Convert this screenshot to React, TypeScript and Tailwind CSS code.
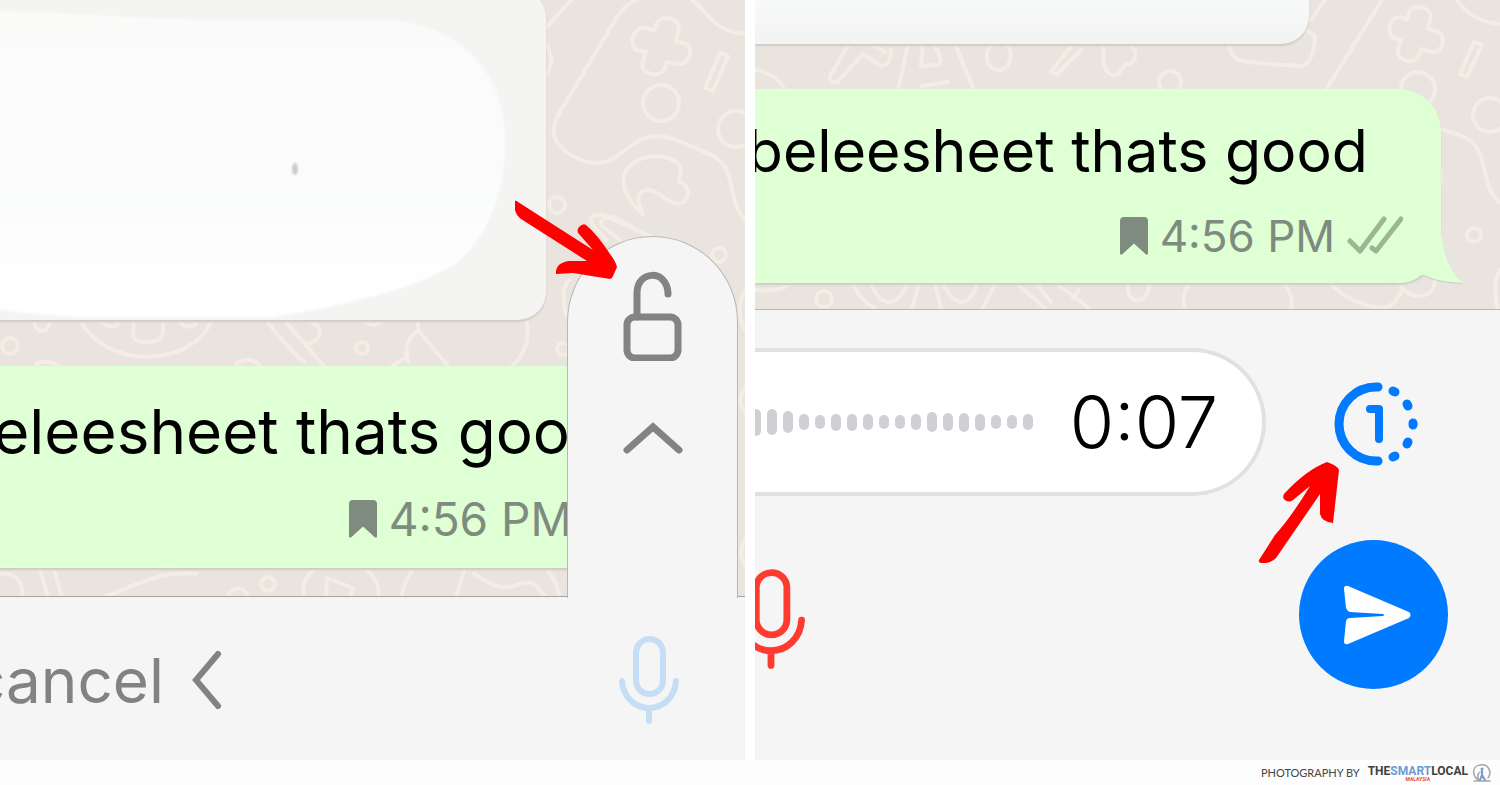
import React from 'react';

const BUBBLE_TEXT = 'beleesheet thats good';
const WAVE_BARS = [27, 26, 22, 16, 14, 17, 17, 16, 14, 14, 16, 20, 18, 19, 17, 14, 14, 16];

const LeftDoodles: React.FC = () => (
  <svg
    aria-hidden="true"
    className="absolute inset-0 h-full w-full"
    viewBox="0 0 745 597"
    preserveAspectRatio="xMaxYMin slice"
    fill="none"
    stroke="#f3ede5"
    strokeWidth="4"
    strokeLinecap="round"
    strokeLinejoin="round"
  >
    {/* game controller */}
    <path d="M546 28L571 0M636 0C626 4 620 11 614 22L560 112C550 128 552 140 564 150C580 163 600 167 614 158C630 148 638 136 657 136C672 136 690 146 709 154C722 160 726 166 730 180C735 204 738 214 745 219M692 0C708 10 712 32 745 34" />
    <path d="M656 26C658 14 678 16 679 28L676 41L687 44C694 54 688 66 676 64L667 62L664 70C658 78 642 74 642 64L646 52L636 50C628 42 634 26 646 28L654 31Z" />
    <path d="M720 53L728 56L713 91L705 88Z" />
    <circle cx="661" cy="103" r="18" />
    <circle cx="736" cy="129" r="18" />
    <path d="M546 44C554 56 552 68 546 74" />
    {/* wrench */}
    <path d="M643 214C630 204 622 190 624 176C630 154 668 150 680 166C684 172 676 178 680 182C690 186 690 194 684 202C670 210 660 188 646 190C634 194 638 202 643 214" />
    <circle cx="557" cy="205" r="8" />
    <path d="M650 236L612 219C600 212 586 214 592 224L606 240M654 240L622 221C610 214 598 218 602 226L620 240" />
    <circle cx="719" cy="255" r="7" />
    <path d="M745 292C738 302 738 318 745 330M745 388C738 396 740 408 745 412M745 540C740 546 740 560 745 566" />
    <path d="M569 280C560 290 564 300 566 316M527 322C530 340 524 356 512 366" />
    <circle cx="563" cy="349" r="6" />
    {/* strip between the two bubbles */}
    <circle cx="10" cy="346" r="8" />
    <path d="M34 322C36 334 48 334 50 322M80 320C106 370 192 368 212 320M100 320C108 330 118 328 120 320M178 320C186 330 194 328 198 320" />
    <path d="M134 320L133 335C134 342 140 342 148 342C156 342 162 340 163 333L163 320M36 364C42 361 52 361 58 366M266 320C278 336 290 350 304 362M284 320L324 366M236 364C244 358 254 358 260 366" />
    <path d="M312 322C326 330 320 340 308 344M418 320V330C406 340 404 350 408 362M418 330L448 366M408 356L392 366M366 322C372 326 378 326 382 320" />
    <circle cx="362" cy="348" r="6" />
    {/* strip under the green bubble */}
    <path d="M0 574C14 572 24 580 22 597M40 569L48 597M54 569L62 597M104 597C140 584 160 570 196 574M228 597C230 586 246 586 248 597" />
    <circle cx="268" cy="584" r="7" />
    <path d="M314 569C304 578 302 588 304 597M366 569C376 578 380 588 378 597M326 597L327 578L353 588L350 597M412 571C406 580 402 588 402 597M464 571L456 597M474 574C500 592 508 588 520 584C536 578 538 590 546 597M548 571C554 578 558 588 560 597" />
  </svg>
);

const RightDoodles: React.FC = () => (
  <svg
    aria-hidden="true"
    className="absolute inset-0 h-full w-full"
    viewBox="0 0 745 310"
    preserveAspectRatio="xMaxYMin slice"
    fill="none"
    stroke="#f3ede5"
    strokeWidth="4"
    strokeLinecap="round"
    strokeLinejoin="round"
  >
    <path d="M0 70C14 72 24 78 30 90M94 44L75 76C74 82 80 84 84 80L108 54L126 66C132 66 136 60 136 50M116 44L130 52M153 44L143 90M168 44L166 66L184 65C188 58 182 50 178 44M167 86L193 82M200 44L218 88" />
    <path d="M236 44C226 60 236 70 244 70C254 70 260 56 252 44M318 44L296 72L302 74L326 50M348 44C348 60 348 76 360 75C368 74 366 64 374 64C382 60 382 52 376 44" />
    <circle cx="415" cy="82" r="11" />
    <path d="M474 46C476 66 498 62 544 66C556 66 560 50 560 36L552 30M556 20L570 0M627 0L572 88" />
    {/* game controller */}
    <path d="M654 12C657 4 674 6 676 16L673 29L684 32C692 40 686 54 676 52L666 49L663 57C656 65 642 60 643 51L646 40L638 38C630 30 636 16 646 17L652 20Z" />
    <path d="M719 42L727 45L712 77L705 74Z" />
    <circle cx="663" cy="89" r="17" />
    <circle cx="735" cy="115" r="17" />
    <path d="M702 0C710 12 724 22 745 24M686 129C710 136 720 140 726 156C732 180 734 196 745 202" />
    <circle cx="719" cy="235" r="7" />
    <path d="M686 170L686 184M745 270C738 282 740 300 743 310" />
    {/* strip under the bubble */}
    <path d="M0 290C14 292 26 290 36 284M98 284C104 298 114 306 120 308M116 284C126 308 142 308 152 284M164 284L157 308M180 284L186 308M188 284C200 308 214 308 222 284M240 284L228 308M262 284L290 308M282 284L296 302M302 284L334 308M318 298L324 290" />
    <circle cx="69" cy="299" r="8" />
    <path d="M373 284C370 306 394 306 394 284M434 284C428 292 428 302 430 310M530 284C536 292 538 302 536 310M576 284C590 298 606 306 628 308C640 306 642 298 646 292M646 286C654 300 678 300 680 282" />
  </svg>
);

const BookmarkIcon = () => (
  <svg aria-hidden="true" className="h-10 w-7 shrink-0 fill-[#7e8b7e]" viewBox="0 0 28 40">
    <path d="M4 1H24Q28 1 28 5V37Q28 40 25.500 38L14 27.500L2.500 38Q0 40 0 37V5Q0 1 4 1Z" />
  </svg>
);

const DoubleCheckIcon = () => (
  <svg
    aria-hidden="true"
    className="h-10 w-14 shrink-0"
    viewBox="0 0 56 40"
    fill="none"
    stroke="#9db592"
    strokeWidth="5"
    strokeLinecap="round"
    strokeLinejoin="round"
  >
    <path d="M3 25L13 35L37 3M25 32L29 35L54 3" />
  </svg>
);

const MicIcon = ({ className }: { className: string }) => (
  <svg
    aria-hidden="true"
    className={className}
    viewBox="0 0 60 88"
    fill="none"
    stroke="currentColor"
    strokeWidth="6"
    strokeLinecap="round"
  >
    <rect x="17" y="3" width="27" height="55" rx="13.500" />
    <path d="M3 45C4 61 16 72 30 72S56 61 57 45M30 72V85" />
  </svg>
);

const LockIcon = () => (
  <svg
    aria-hidden="true"
    className="h-[90px] w-[60px]"
    viewBox="0 0 60 90"
    fill="none"
    stroke="#838383"
    strokeWidth="7"
    strokeLinecap="round"
  >
    <rect x="4" y="46" width="51" height="41" rx="8" />
    <path d="M14 46V22C14 -1 44 -2 45 22V23" />
  </svg>
);

const LeftPanel = () => (
  <section className="relative flex min-w-0 flex-1 flex-col overflow-hidden bg-[#f5f5f5]">
    <div className="relative flex flex-col items-start overflow-hidden border-b border-[#a5a3a1] bg-[#e9e4de] pb-7">
      <LeftDoodles />
      <div className="relative -mt-2.5 h-[330px] w-[546px] overflow-hidden rounded-r-[28px] bg-[#f4f4f3] pt-2.5 shadow-[0_2px_2px_#cfcac5]">
        <svg aria-hidden="true" className="h-full w-full" viewBox="0 0 546 320">
          <defs>
            <linearGradient id="fade" x1="0" y1="0" x2="0" y2="1">
              <stop offset="0" stopColor="#fafaf9" />
              <stop offset="0.600" stopColor="#fbfcfc" />
              <stop offset="1" stopColor="#ffffff" />
            </linearGradient>
            <filter id="soft">
              <feGaussianBlur stdDeviation="1" />
            </filter>
          </defs>
          <path
            d="M-20 11C60 11 120 19 220 20L390 20C450 24 505 64 505 140C505 190 490 232 462 258C430 286 350 304 270 318H90C60 316 20 314 -20 306Z"
            fill="url(#fade)"
            filter="url(#soft)"
          />
          <ellipse cx="295" cy="169" rx="3" ry="6" fill="#c8cac8" filter="url(#soft)" />
        </svg>
      </div>
      <div className="relative mt-[46px] flex h-[202px] w-[680px] flex-col items-end rounded-tr-[44px] bg-[#dfffd4] pr-[72px] font-['Inter',sans-serif] shadow-[0_2px_2px_#cfcac5]">
        <p className="mt-[26px] text-[62px] leading-20 whitespace-nowrap text-black">{BUBBLE_TEXT}</p>
        <div className="mt-[19px] mr-9 flex items-center gap-3 text-[#7e8b7e]">
          <BookmarkIcon />
          <time className="text-[46px] leading-14 whitespace-nowrap">4:56 PM</time>
        </div>
      </div>
    </div>

    <div className="flex flex-1 items-center justify-between pt-0.5 pr-[66px]">
      <button type="button" className="flex w-[222px] items-center justify-end gap-7 font-['Inter',sans-serif] text-[62px] leading-20 whitespace-nowrap text-[#828282]">
        <span className="pt-0.5">cancel</span>
        <svg aria-hidden="true" className="h-[60px] w-[30px] shrink-0" viewBox="0 0 30 60" fill="none" stroke="currentColor" strokeWidth="6" strokeLinecap="round">
          <path d="M26 4L4 30L26 56" />
        </svg>
      </button>
      <button type="button" aria-label="Record">
        <MicIcon className="h-[88px] w-[60px] text-[#c5def5]" />
      </button>
    </div>

    {/* slide-up lock capsule */}
    <div className="absolute top-[236px] right-[7px] flex h-[362px] w-[171px] flex-col items-center gap-[61px] rounded-t-full border border-b-0 border-[#b9b7b5] bg-[#f5f5f5] pt-[34px]">
      <LockIcon />
      <svg aria-hidden="true" className="h-8 w-[60px]" viewBox="0 0 60 32" fill="none" stroke="#838383" strokeWidth="7" strokeLinecap="round">
        <path d="M4 28L30 5L56 28" />
      </svg>
    </div>
    <svg aria-hidden="true" className="absolute top-[200px] right-32 h-20 w-[104px] fill-[#ff0000]" viewBox="0 0 104 80">
      <path d="M2 1V10Q3 15 8 19L74 61H56Q42 63 43 74L60 73L97 79Q99 79 100 76L104 67Q103 62 97 54Q84 34 73 25Q70 23 66 27Q63 31 66 34L80 50L5 2Q3 0 2 1Z" />
    </svg>
  </section>
);

const RightPanel = () => (
  <section className="relative flex min-w-0 flex-1 flex-col overflow-hidden bg-[#f5f5f5]">
    <div className="relative flex flex-col items-start overflow-hidden border-b border-[#b9b7b3] bg-[#e9e4de] pb-[26px]">
      <RightDoodles />
      <div className="relative h-11 w-[554px] rounded-br-[28px] bg-linear-to-b from-[#f8f9f9] to-[#f3f3f4] shadow-[0_2px_2px_#cfcac5]" />
      <div className="relative mt-[45px] flex h-[194px] w-[686px] flex-col items-end rounded-tr-[42px] rounded-br-[44px] bg-[#dfffd4] pr-[38px] font-['Inter',sans-serif] shadow-[0_2px_2px_#cfcac5]">
        <svg aria-hidden="true" className="absolute right-[-22px] bottom-[-2px] h-16 w-20 fill-[#dfffd4] drop-shadow-[0_1px_0_#cfcac5]" viewBox="0 0 80 64">
          <path d="M0 62H20Q30 61 37 55Q40 53 43 55Q56 61 80 62Q58 44 58 0H0Z" />
        </svg>
        <p className="relative mt-[22px] mr-[35px] text-[59px] leading-20 whitespace-nowrap text-black">{BUBBLE_TEXT}</p>
        <div className="relative mt-[17px] flex items-center gap-3 text-[#7e8b7e]">
          <BookmarkIcon />
          <time className="text-[44px] leading-14 whitespace-nowrap">4:56 PM</time>
          <DoubleCheckIcon />
        </div>
      </div>
    </div>

    <div className="flex flex-1 flex-col pt-[38px] pr-[52px]">
      <div className="flex items-center justify-between pr-[30px]">
        <div className="flex h-[148px] w-[511px] items-center justify-between rounded-r-full border-4 border-l-0 border-[#e1e1e2] bg-white pr-11">
          <div className="-ml-1 flex items-center gap-1.5">
            {WAVE_BARS.map((h, i) => (
              <span key={i} className="w-2.5 rounded-full bg-[#cfd0d3]" style={{ height: h }} />
            ))}
          </div>
          <span className="font-['Inter',sans-serif] text-[72px] leading-20 font-light text-black">0:07</span>
        </div>
        <button type="button" aria-label="View once" className="pt-1">
          <svg aria-hidden="true" className="h-[84px] w-[84px]" viewBox="0 0 84 84" fill="none" stroke="#007aff" strokeWidth="9" strokeLinecap="round">
            <path d="M44 5H42A37 37 0 0 0 42 79H44" />
            <path d="M36 27H45V57" strokeWidth="8" strokeLinejoin="round" />
            <path d="M59 9L61 10M73 22L74 24M79 41V43M74 60L73 62M61 74L59 75" />
          </svg>
        </button>
      </div>
      <div className="mt-11 flex items-center justify-between">
        <button type="button" aria-label="Recording" className="-ml-[18px] pt-2">
          <MicIcon className="h-[100px] w-[68px] text-[#ff3b30]" />
        </button>
        <button type="button" aria-label="Send" className="flex h-[149px] w-[149px] items-center justify-center rounded-full bg-[#007aff] pl-1.5">
          <svg aria-hidden="true" className="h-[60px] w-[68px] fill-white" viewBox="0 0 68 60">
            <path d="M5 1L66 27Q69 30 66 33L5 59Q1 60 1 56L3 36Q4 33 7 33L40 31Q42 30 40 29L7 27Q4 26 3 23L1 4Q1 0 5 1Z" />
          </svg>
        </button>
      </div>
    </div>
    <svg aria-hidden="true" className="absolute top-[462px] right-[160px] h-[101px] w-[82px] fill-[#ff0000]" viewBox="0 0 82 101">
      <path d="M69 0Q48 8 26 32Q24 36 27 38Q31 41 35 38L52 24Q34 54 17 73L1 98Q0 101 4 101H8Q14 100 18 96L62 32V52Q64 60 75 61L81 8Q80 4 69 0Z" />
    </svg>
  </section>
);

const Footer = () => (
  <footer className="flex h-[25px] items-center justify-end gap-2 bg-[#fdfdfd] pr-2">
    <span className="font-['Lato',sans-serif] text-[11px] leading-4 text-[#444444]">PHOTOGRAPHY BY</span>
    <div className="flex items-center gap-1">
      <div className="flex flex-col items-center font-['Roboto',sans-serif] font-bold">
        <span className="text-[12px] leading-3 text-[#3d4042]">
          THE<span className="text-[#6f9bd1]">SMART</span>LOCAL
        </span>
        <span className="text-[5px] leading-1 text-[#e0523f]">MALAYSIA</span>
      </div>
      <svg aria-hidden="true" className="h-5 w-5" viewBox="0 0 20 20" fill="none" strokeLinecap="round">
        <path d="M8 17C0 15 -1 3 8 2C17 0 20 10 16 15M8 17C5 16 5 11 8 9M2 18H18" stroke="#a3a7aa" strokeWidth="1.500" />
        <path d="M10 8V12L8 17M10 12L13 17" stroke="#6f9bd1" strokeWidth="2" />
        <circle cx="10" cy="6" r="1.500" fill="#6f9bd1" />
      </svg>
    </div>
  </footer>
);

export default function App() {
  return (
    <div className="flex min-h-screen flex-col bg-white">
      <main className="flex flex-1 gap-2.5">
        <LeftPanel />
        <RightPanel />
      </main>
      <Footer />
    </div>
  );
}
